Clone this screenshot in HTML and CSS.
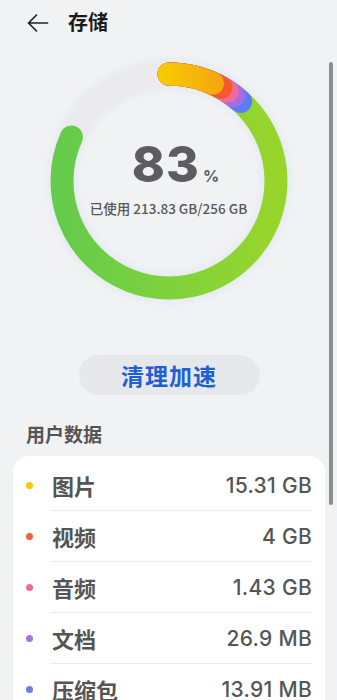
FILE: index.html
```html
<!DOCTYPE html>
<html lang="zh-CN">
<head>
<meta charset="utf-8">
<link rel="stylesheet" href="styles.css">
</head>
<body>
<div class="page">
  <header class="topbar">
    <svg class="back" width="22" height="20" viewBox="0 0 22 20" fill="none" stroke="#222" stroke-width="1.7" stroke-linecap="round" stroke-linejoin="round">
      <path d="M20.5 10 H1.5 M9.5 2 L1.5 10 L9.5 18"/>
    </svg>
    <h1 class="title">存储</h1>
  </header>

  <section class="ring-wrap">
    <svg class="ring" width="250" height="250" viewBox="0 0 250 250">
      <defs>
        <linearGradient id="gGreen" gradientUnits="userSpaceOnUse" x1="0" y1="18" x2="0" y2="232">
          <stop offset="0" stop-color="#64cb4b"/>
          <stop offset="0.5" stop-color="#7fd23b"/>
          <stop offset="1" stop-color="#98d52b"/>
        </linearGradient>
        <linearGradient id="gYellow" gradientUnits="userSpaceOnUse" x1="0" y1="115" x2="0" y2="175">
          <stop offset="0" stop-color="#f8cc00"/>
          <stop offset="1" stop-color="#f6a70e"/>
        </linearGradient>
      </defs>
      <circle cx="125" cy="125" r="107" fill="none" stroke="#ebebed" stroke-width="23"/>
      <g transform="rotate(-90 125 125)" fill="none" stroke-width="23" stroke-linecap="round">
        <circle cx="125" cy="125" r="107" stroke="url(#gGreen)" stroke-dasharray="549 700"/>
        <circle cx="125" cy="125" r="107" stroke="#5b7cf6" stroke-dasharray="78.4 700"/>
        <circle cx="125" cy="125" r="107" stroke="#a56ce6" stroke-dasharray="69.1 700"/>
        <circle cx="125" cy="125" r="107" stroke="#f06aa0" stroke-dasharray="61.6 700"/>
        <circle cx="125" cy="125" r="107" stroke="#f45a2a" stroke-dasharray="54.2 700"/>
        <circle cx="125" cy="125" r="107" stroke="url(#gYellow)" stroke-dasharray="44.8 700"/>
      </g>
    </svg>
    <div class="ring-text">
      <div class="percent"><span class="num">83</span><span class="pct">%</span></div>
      <div class="used">已使用 213.83 GB/256 GB</div>
    </div>
  </section>

  <div class="action">
    <button class="clean">清理加速</button>
  </div>

  <h2 class="section-title">用户数据</h2>

  <ul class="card">
    <li class="row"><span class="dot" style="background:#f5c800"></span><div class="row-body"><span class="label">图片</span><span class="value">15.31 GB</span></div></li>
    <li class="row"><span class="dot" style="background:#f0623a"></span><div class="row-body"><span class="label">视频</span><span class="value">4 GB</span></div></li>
    <li class="row"><span class="dot" style="background:#ec6a9c"></span><div class="row-body"><span class="label">音频</span><span class="value">1.43 GB</span></div></li>
    <li class="row"><span class="dot" style="background:#a274e2"></span><div class="row-body"><span class="label">文档</span><span class="value">26.9 MB</span></div></li>
    <li class="row"><span class="dot" style="background:#717ce8"></span><div class="row-body"><span class="label">压缩包</span><span class="value">13.91 MB</span></div></li>
  </ul>

  <div class="scrollbar"></div>
</div>
</body>
</html>
```

FILE: styles.css
```css
* { box-sizing: border-box; }
html, body {
  margin: 0;
  padding: 0;
  height: 100%;
  overflow: hidden;
}
body {
  background: #f1f2f4;
  font-family: "Noto Sans CJK SC", "Noto Sans", sans-serif;
  color: #555;
}
.page {
  position: relative;
  width: 337px;
  height: 700px;
  overflow: hidden;
}
.topbar {
  height: 44px;
  display: flex;
  align-items: center;
  padding-left: 27px;
}
.back { display: block; margin-top: 2px; }
.title {
  margin: 0 0 0 19px;
  font-size: 20px;
  font-weight: 700;
  color: #1b1b1b;
  line-height: 1;
}
.ring-wrap {
  margin-top: 12px;
  display: grid;
  justify-items: center;
  align-items: center;
}
.ring, .ring-text { grid-area: 1 / 1; }
.ring {
  display: block;
  filter: drop-shadow(0 0 5px rgba(150, 200, 230, 0.25));
}
.ring-text {
  display: flex;
  flex-direction: column;
  align-items: center;
  padding-bottom: 8px;
}
.percent {
  display: flex;
  align-items: baseline;
  padding-left: 14px;
}
.num {
  font-family: Inter, "Noto Sans", sans-serif;
  font-weight: 800;
  font-size: 50px;
  letter-spacing: 1px;
  color: #5d5d5f;
  line-height: 1;
}
.pct {
  font-family: Inter, "Noto Sans", sans-serif;
  font-weight: 700;
  font-size: 16px;
  color: #5d5d5f;
  margin-left: 3px;
}
.used {
  margin-top: 13px;
  font-size: 13.5px;
  font-weight: 500;
  color: #585858;
  line-height: 1;
}
.action {
  display: flex;
  justify-content: center;
  margin-top: 49px;
}
.clean {
  width: 181px;
  height: 40px;
  border: none;
  border-radius: 20px;
  background: #e7e8eb;
  color: #1d5fd7;
  font-family: "Noto Sans CJK SC", sans-serif;
  font-weight: 700;
  font-size: 23px;
  letter-spacing: 1px;
  padding: 0;
  margin-left: 1px;
}
.section-title {
  margin: 27px 0 0 26px;
  font-size: 19px;
  font-weight: 700;
  color: #555;
  line-height: 24px;
}
.card {
  list-style: none;
  margin: 10px 12px 0 13px;
  padding: 4px 13px 40px 13px;
  background: #fff;
  border-radius: 16px;
}
.row {
  display: flex;
  align-items: center;
}
.dot {
  width: 7px;
  height: 7px;
  border-radius: 50%;
  flex: none;
  margin-right: 17px;
}
.row-body {
  flex: 1;
  height: 51px;
  display: flex;
  align-items: center;
  justify-content: space-between;
  border-bottom: 1px solid #ececec;
}
.label {
  font-size: 22px;
  font-weight: 700;
  color: #555;
  margin-left: 2px;
}
.value {
  font-family: Inter, "Noto Sans", sans-serif;
  font-size: 21px;
  font-weight: 500;
  letter-spacing: 0.3px;
  color: #555;
}
.scrollbar {
  position: absolute;
  left: 329px;
  top: 62px;
  width: 4px;
  height: 443px;
  border-radius: 2px;
  background: #8d8d8d;
}
```
